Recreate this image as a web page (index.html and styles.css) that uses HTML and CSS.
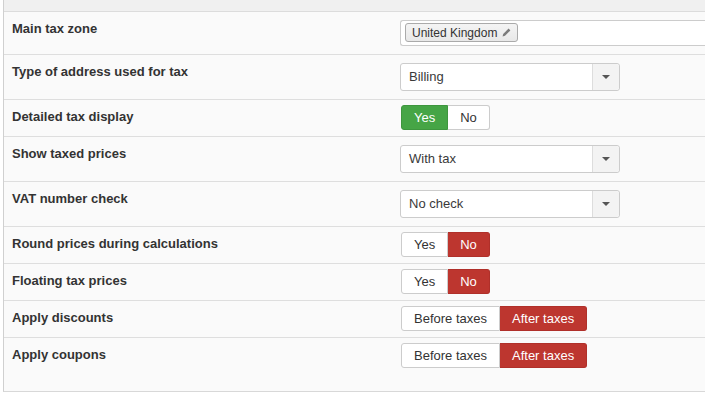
FILE: index.html
```html
<!DOCTYPE html>
<html lang="en">
<head>
    <meta charset="UTF-8">
    <meta name="viewport" content="width=device-width, initial-scale=1.0">
    <title>Tax configuration</title>
    <link rel="stylesheet" href="styles.css">
</head>
<body>
    <div class="config">
        <div class="config-head"></div>
        <table class="admintable">
            <tr>
                <td class="key">Main tax zone</td>
                <td class="value value-wide">
                    <div class="tag-input">
                        <span class="tag">United Kingdom
                            <svg class="pencil" width="9" height="9" viewBox="0 0 9 9">
                                <path d="M6.6 0.6 L8.4 2.4 L3 7.8 L0.6 8.4 L1.2 6 Z" fill="#7a7a7a"/>
                            </svg>
                        </span>
                    </div>
                </td>
            </tr>
            <tr>
                <td class="key">Type of address used for tax</td>
                <td class="value">
                    <div class="select"><span class="select-text">Billing</span><span class="select-arrow"><b></b></span></div>
                </td>
            </tr>
            <tr class="toggle-row">
                <td class="key">Detailed tax display</td>
                <td class="value">
                    <div class="btn-group"><span class="btn btn-yes">Yes</span><span class="btn">No</span></div>
                </td>
            </tr>
            <tr>
                <td class="key">Show taxed prices</td>
                <td class="value">
                    <div class="select"><span class="select-text">With tax</span><span class="select-arrow"><b></b></span></div>
                </td>
            </tr>
            <tr>
                <td class="key">VAT number check</td>
                <td class="value">
                    <div class="select"><span class="select-text">No check</span><span class="select-arrow"><b></b></span></div>
                </td>
            </tr>
            <tr class="toggle-row">
                <td class="key">Round prices during calculations</td>
                <td class="value">
                    <div class="btn-group"><span class="btn">Yes</span><span class="btn btn-no">No</span></div>
                </td>
            </tr>
            <tr class="toggle-row">
                <td class="key">Floating tax prices</td>
                <td class="value">
                    <div class="btn-group"><span class="btn">Yes</span><span class="btn btn-no">No</span></div>
                </td>
            </tr>
            <tr class="toggle-row">
                <td class="key">Apply discounts</td>
                <td class="value">
                    <div class="btn-group"><span class="btn">Before taxes</span><span class="btn btn-no">After taxes</span></div>
                </td>
            </tr>
            <tr class="toggle-row">
                <td class="key">Apply coupons</td>
                <td class="value">
                    <div class="btn-group"><span class="btn">Before taxes</span><span class="btn btn-no">After taxes</span></div>
                </td>
            </tr>
        </table>
    </div>
</body>
</html>
```

FILE: styles.css
```css
* {
    box-sizing: border-box;
}

body {
    margin: 0;
    overflow: hidden;
    background-color: white;
    font-family: "Liberation Sans", Arial, sans-serif;
    font-size: 13px;
    color: #333;
}

.config {
    margin-left: 3px;
    width: 702px;
    padding-bottom: 17px;
    background-color: #fafafa;
    border-left: 1px solid #d0d0d0;
    border-bottom: 1px solid #d8d8d8;
}

.config-head {
    height: 12px;
    background-color: #f0f0f0;
    border-bottom: 1px solid #dcdcdc;
}

.admintable {
    width: 100%;
    border-collapse: collapse;
    table-layout: fixed;
}

.admintable tr + tr td {
    border-top: 1px solid #dedede;
}

.admintable td {
    vertical-align: top;
    padding: 8px;
}

.admintable td.key {
    width: 388px;
    font-weight: bold;
    line-height: 18px;
}

.admintable td.value-wide {
    padding-right: 0;
}

.toggle-row td.value {
    padding: 5px 8px 6px 9px;
}

/* the zone picker runs past the right edge of the panel */
.tag-input {
    height: 26px;
    padding: 2px 4px;
    background-color: white;
    border: 1px solid #ccc;
    border-right: none;
    border-radius: 3px 0 0 3px;
}

.tag {
    display: inline-flex;
    align-items: center;
    gap: 5px;
    height: 19px;
    padding: 0 6px;
    font-size: 12px;
    color: #333;
    border: 1px solid #aaa;
    border-radius: 3px;
    background: linear-gradient(#f4f4f4, #e8e8e8);
}

.select {
    display: flex;
    width: 220px;
    height: 28px;
    background-color: white;
    border: 1px solid #ccc;
    border-radius: 3px;
}

.select-text {
    flex: 1;
    padding-left: 8px;
    line-height: 26px;
    color: #3a3a3a;
}

.select-arrow {
    width: 27px;
    display: flex;
    align-items: center;
    justify-content: center;
    background-color: #f3f3f3;
    border-left: 1px solid #ddd;
    border-radius: 0 3px 3px 0;
}

.select-arrow b {
    width: 0;
    height: 0;
    border-left: 4px solid transparent;
    border-right: 4px solid transparent;
    border-top: 4px solid #555;
}

.btn-group {
    display: inline-flex;
}

.btn {
    height: 25px;
    line-height: 23px;
    padding: 0 12px;
    color: #333;
    background-color: white;
    border: 1px solid #ccc;
}

.btn:first-child {
    border-radius: 3px 0 0 3px;
}

.btn:last-child {
    border-radius: 0 3px 3px 0;
    border-left: none;
}

.btn-yes {
    color: white;
    background-color: #46a546;
    border-color: #3e963e;
}

.btn-no {
    color: white;
    background-color: #bd362f;
    border-color: #b0302a;
}
```
